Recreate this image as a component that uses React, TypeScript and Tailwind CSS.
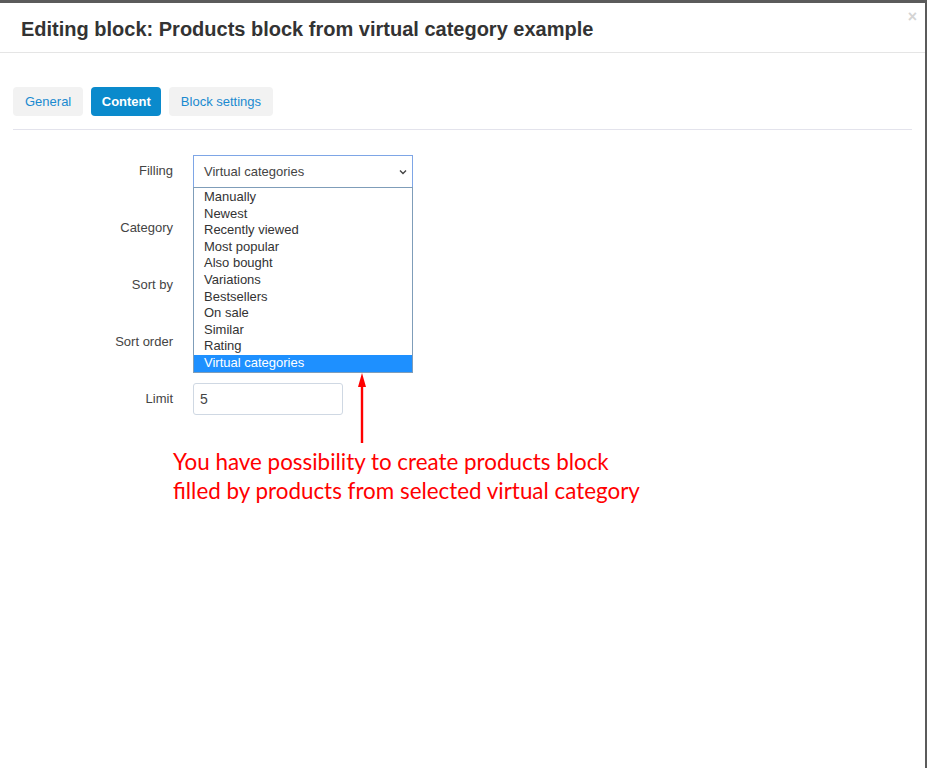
import React from 'react';

const options = [
    'Manually',
    'Newest',
    'Recently viewed',
    'Most popular',
    'Also bought',
    'Variations',
    'Bestsellers',
    'On sale',
    'Similar',
    'Rating',
    'Virtual categories',
];

const labels = ['Filling', 'Category', 'Sort by', 'Sort order'];

const App = () => {
    return (
        <div className="h-[768px] w-[927px] overflow-hidden bg-white font-['Liberation_Sans',Arial,sans-serif] text-[#333]">
            <div className="flex h-full flex-col border-t-[3px] border-r-[2px] border-[#5b5b5b]">
                <div className="relative flex h-[50px] items-center border-b border-[#e5e5e5] pl-[21px]">
                    <h1 className="mt-[2px] text-[20px] font-bold text-[#333]">Editing block: Products block from virtual category example</h1>
                    <span className="absolute right-[8px] top-[6px] text-[16px] font-bold leading-none text-[#d4d4d4]">×</span>
                </div>

                <div className="px-[13px] pt-[34px]">
                    <div className="flex gap-[8px] border-b border-[#e3e3ec] pb-[13px]">
                        <button className="h-[29px] rounded-[4px] bg-[#f2f2f2] px-[12px] text-[13px] text-[#1a8ad0]">General</button>
                        <button className="h-[29px] rounded-[4px] bg-[#0a8acc] px-[10.5px] text-[13px] font-bold text-white">Content</button>
                        <button className="h-[29px] rounded-[4px] bg-[#f2f2f2] px-[11.5px] text-[13px] text-[#1a8ad0]">Block settings</button>
                    </div>
                </div>

                <div className="relative flex pt-[25px]">
                    <div className="flex w-[173px] flex-col items-end text-[13px] text-[#444]">
                        {labels.map((label) => (
                            <div key={label} className="flex h-[57px] items-start pt-[6px]">
                                {label}
                            </div>
                        ))}
                        <div className="flex h-[32px] items-center">Limit</div>
                    </div>

                    <div className="ml-[20px] flex flex-col">
                        <div className="relative z-10 w-[220px]">
                            <div className="flex h-[33px] items-center justify-between border border-[#7ea6e6] bg-white pl-[10px] pr-[4px] text-[13px] text-[#444]">
                                <span>Virtual categories</span>
                                <svg width="10" height="10" viewBox="0 0 10 10" className="text-[#444]">
                                    <path d="M2 3.5 L5 6.5 L8 3.5" fill="none" stroke="currentColor" strokeWidth="1.4" />
                                </svg>
                            </div>
                            <div className="absolute left-0 top-[32px] w-[220px] border border-[#7f9db9] bg-white pt-[1px] text-[13px] leading-[16.6px] text-[#333]">
                                {options.map((opt) => (
                                    <div
                                        key={opt}
                                        className={
                                            opt === 'Virtual categories'
                                                ? 'bg-[#1e90ff] pl-[10px] text-white'
                                                : 'pl-[10px]'
                                        }
                                    >
                                        {opt}
                                    </div>
                                ))}
                            </div>
                        </div>
                        <div className="h-[195px]" />
                        <div className="flex h-[32px] w-[150px] items-center rounded-[3px] border border-[#cfd8e3] pl-[6px] text-[14px] text-[#444]">
                            5
                        </div>
                    </div>

                    <svg className="absolute left-[355px] top-[243px] z-20" width="14" height="72" viewBox="0 0 14 72">
                        <path d="M7 0 L11 14 L3 14 Z" fill="#ff0000" />
                        <rect x="5.8" y="12" width="2.4" height="58" fill="#ff0000" />
                    </svg>
                </div>

                <div className="pl-[173px] pt-[32px] font-['Lato','Open_Sans',sans-serif] text-[22.4px] leading-[29px] text-[#ff0000]">
                    <p>You have possibility to create products block</p>
                    <p>filled by products from selected virtual category</p>
                </div>
            </div>
        </div>
    );
};

export default App;
